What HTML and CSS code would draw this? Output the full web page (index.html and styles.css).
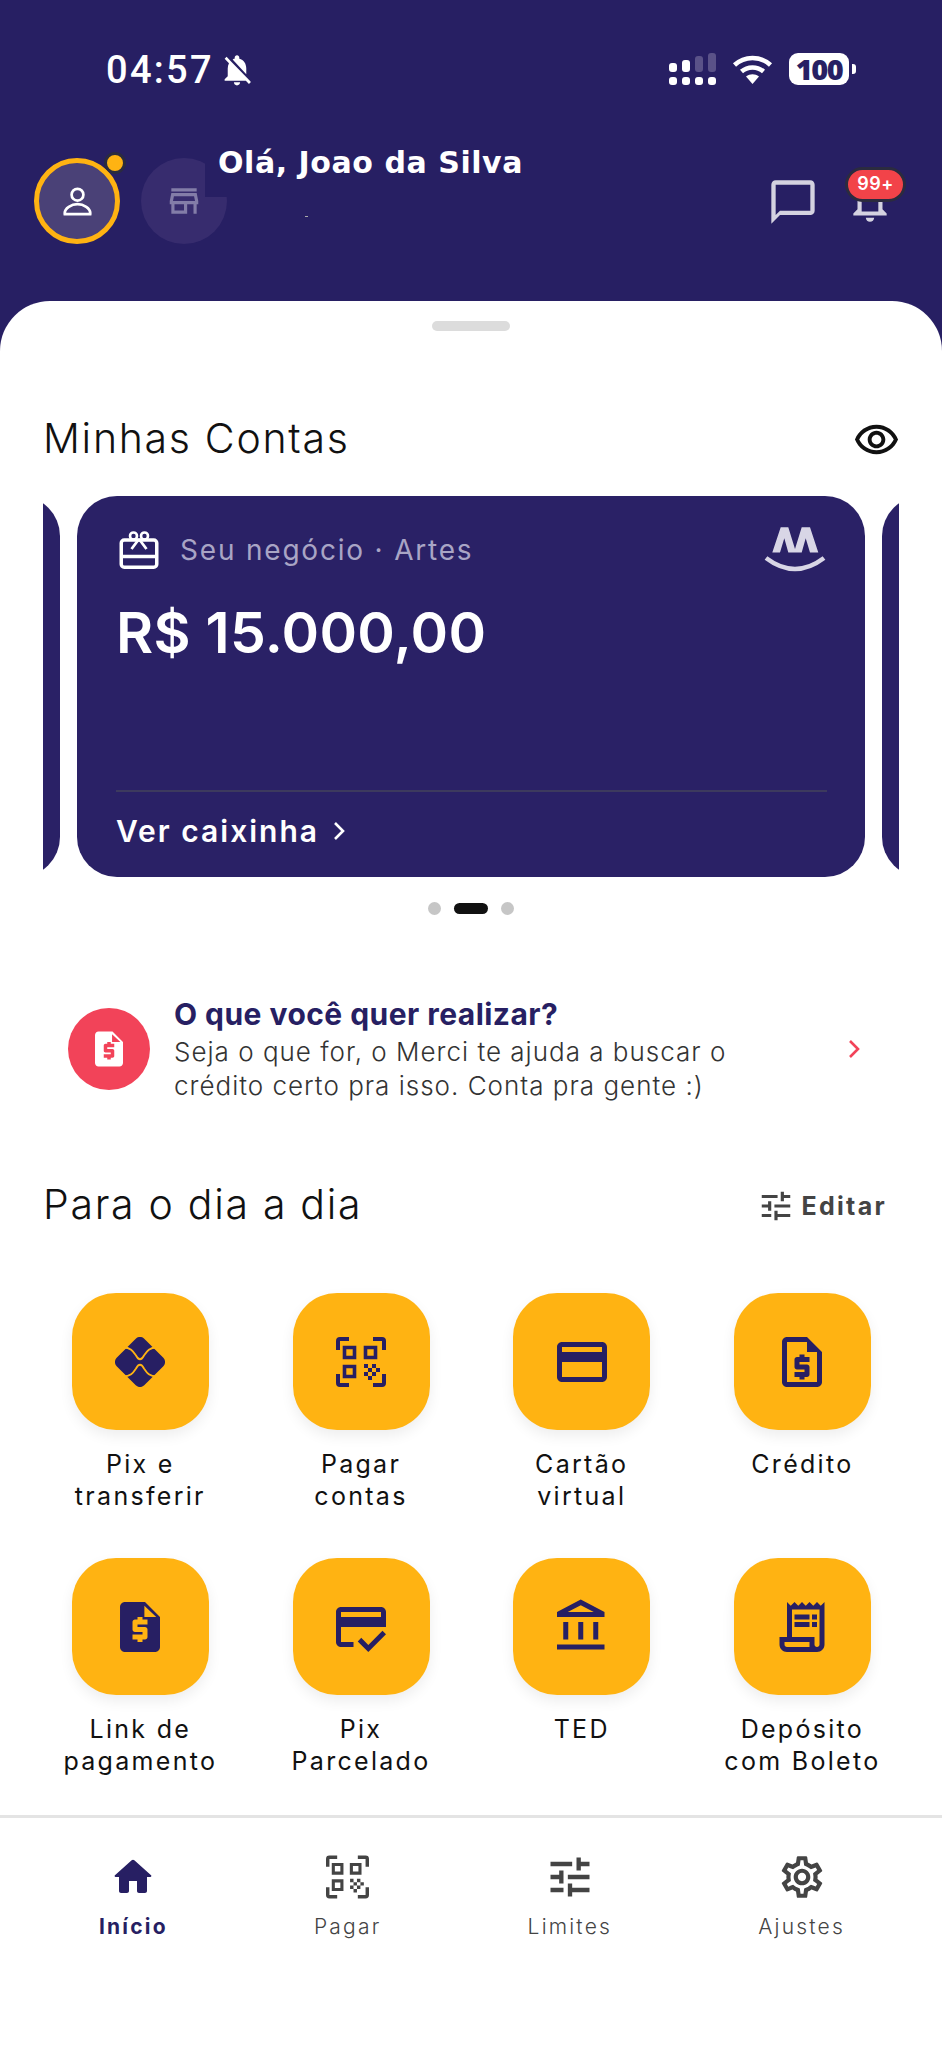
FILE: index.html
```html
<!DOCTYPE html>
<html lang="pt-BR">
<head>
<meta charset="UTF-8">
<title>Merci</title>
<link rel="stylesheet" href="styles.css">
</head>
<body>

<svg class="sprite" width="0" height="0">
  <symbol id="qr" viewBox="0 0 50 50">
    <path d="M2 13V4a2 2 0 0 1 2-2h9M37 2h9a2 2 0 0 1 2 2v9M2 37v9a2 2 0 0 0 2 2h9M37 48h9a2 2 0 0 0 2-2v-9" fill="none" stroke="currentColor" stroke-width="4"/>
    <path d="M8.500 10.500h10v10h-10zM29.500 10.500h10v10h-10zM8.500 29.500h10v10h-10z" fill="none" stroke="currentColor" stroke-width="3.600"/>
    <path d="M28 27h4v4h-4zM36 27h4v4h-4zM32 31h4v4h-4zM40 31h4v4h-4zM28 35h4v4h-4zM36 35h4v4h-4zM32 39h4v4h-4z" fill="currentColor"/>
  </symbol>
  <symbol id="tune" viewBox="0 0 24 24">
    <path d="M3 17v2h6v-2H3zM3 5v2h10V5H3zm10 16v-2h8v-2h-8v-2h-2v6h2zM7 9v2H3v2h4v2h2V9H7zm14 4v-2H11v2h10zm-6-4h2V7h4V5h-4V3h-2v6z" fill="currentColor"/>
  </symbol>
  <symbol id="chev" viewBox="0 0 12 20">
    <path d="M2 2l8 8-8 8" fill="none" stroke="currentColor" stroke-width="2.600"/>
  </symbol>
</svg>

<header class="top">
  <div class="status">
    <div class="status-left">
      <span class="clock">04:57</span>
      <svg class="muted" viewBox="2 1 20 22"><path d="M20 18.690L7.840 6.140 5.270 3.490 4 4.760l2.800 2.800v.01c-.52.99-.8 2.160-.8 3.420v5l-2 2v1h13.730l2 2L21 19.720l-1-1.030zM12 22c1.110 0 2-.89 2-2h-4c0 1.110.89 2 2 2zm6-7.320V11c0-3.080-1.640-5.640-4.500-6.320V4c0-.83-.67-1.500-1.500-1.500s-1.500.67-1.500 1.500v.68c-.15.03-.29.08-.42.120-.1.03-.2.07-.3.11h-.01c-.2.08-.4.17-.59.27-.01 0-.01 0-.02.01L18 14.680z" fill="#fff"/></svg>
    </div>
    <div class="status-right">
      <div class="signal">
        <span class="col"><i class="bar b1"></i><i class="pip"></i></span>
        <span class="col"><i class="bar b2"></i><i class="pip"></i></span>
        <span class="col"><i class="bar b3 off"></i><i class="pip"></i></span>
        <span class="col"><i class="bar b4 off"></i><i class="pip"></i></span>
      </div>
      <svg class="wifi" viewBox="0 0 41 30">
        <path d="M2.500 11C12.500 1.500 28.500 1.500 38.500 11" fill="none" stroke="#fff" stroke-width="4.500"/>
        <path d="M9.500 17.500C15.500 12 25.500 12 31.500 17.500" fill="none" stroke="#fff" stroke-width="4.500"/>
        <path d="M14 22.500c4-3 9-3 13 0l-6.500 7.500z" fill="#fff"/>
      </svg>
      <div class="battery"><span class="level">100</span><i class="nub"></i></div>
    </div>
  </div>

  <div class="greet">
    <div class="avatar">
      <svg width="29" height="29" viewBox="0 0 32 32">
        <circle cx="16" cy="8.500" r="6.500" fill="none" stroke="#fff" stroke-width="3"/>
        <path d="M2 30h28c1-7-8-11-14-11S1 23 2 30z" fill="none" stroke="#fff" stroke-width="3"/>
      </svg>
      <i class="avatar-dot"></i>
    </div>
    <div class="shop">
      <svg width="38" height="38" viewBox="0 0 24 24"><path d="M20 4H4v2h16V4zm1 10v-2l-1-5H4l-1 5v2h1v6h10v-6h4v6h2v-6h1zm-9 4H6v-4h6v4zm-6.960-6l.6-3h12.720l.6 3H5.040z" fill="#837da8"/></svg>
    </div>
    <div class="who">
      <div class="who-name">Olá, Joao da Silva</div>
      <i class="who-mark"></i>
    </div>
    <div class="top-actions">
      <svg width="52" height="52" viewBox="0 0 24 24"><path d="M20 2H4c-1.100 0-2 .9-2 2v18l4-4h14c1.100 0 2-.9 2-2V4c0-1.100-.9-2-2-2zm0 14H6l-2 2V4h16v12z" fill="#d4d2e0"/></svg>
      <div class="bell">
        <svg width="50" height="50" viewBox="0 0 24 24"><path d="M12 22c1.100 0 2-.9 2-2h-4c0 1.100.9 2 2 2zm6-6v-5c0-3.070-1.630-5.640-4.500-6.320V4c0-.83-.67-1.500-1.500-1.500s-1.500.67-1.500 1.500v.68C7.640 5.360 6 7.920 6 11v5l-2 2v1h16v-1l-2-2zm-2 1H8v-6c0-2.480 1.510-4.500 4-4.500s4 2.020 4 4.500v6z" fill="#d4d2e0"/></svg>
        <span class="badge">99+</span>
      </div>
    </div>
  </div>
</header>

<main class="sheet">
  <div class="handle"></div>

  <div class="sec-head first">
    <h2>Minhas Contas</h2>
    <svg width="47" height="47" viewBox="0 0 24 24"><path d="M12 6c3.790 0 7.170 2.130 8.820 5.500C19.170 14.870 15.790 17 12 17s-7.170-2.130-8.820-5.500C4.830 8.130 8.210 6 12 6m0-2C7 4 2.730 7.110 1 11.500 2.730 15.890 7 19 12 19s9.270-3.110 11-7.500C21.270 7.110 17 4 12 4zm0 5c1.380 0 2.500 1.120 2.500 2.500S13.380 14 12 14s-2.500-1.120-2.500-2.500S10.620 9 12 9m0-2c-2.480 0-4.500 2.020-4.500 4.500S9.520 16 12 16s4.500-2.020 4.500-4.500S14.480 7 12 7z" fill="#111"/></svg>
  </div>

  <div class="carousel">
    <div class="card"></div>
    <div class="card">
      <div class="card-top">
        <svg class="card-gift" width="40" height="38" viewBox="0 0 39 38">
          <rect x="1.750" y="9" width="35.500" height="27.250" rx="3" fill="none" stroke="#fff" stroke-width="3.500"/>
          <path d="M1.500 25.500h36" stroke="#fff" stroke-width="3.500"/>
          <circle cx="14" cy="5" r="3.500" fill="none" stroke="#fff" stroke-width="2.600"/>
          <circle cx="25" cy="5" r="3.500" fill="none" stroke="#fff" stroke-width="2.600"/>
          <path d="M19.500 8L12 18M19.500 8L27 18" stroke="#fff" stroke-width="2.800"/>
        </svg>
        <span class="card-label">Seu negócio · Artes</span>
        <svg class="card-logo" width="64" height="48" viewBox="0 0 64 48">
          <path d="M9.300 26.500L17.700 1.300h7.600L32 23l6.700-21.700H47l8.300 25.200H47L42.700 12.300 38.700 26.500H25.300L21.300 12.300 17 26.500z" fill="#d8d6e6"/>
          <path d="M3 32Q32 54 61 32" fill="none" stroke="#d8d6e6" stroke-width="4.500"/>
        </svg>
      </div>
      <div class="card-amount">R$ 15.000,00</div>
      <div class="card-foot">
        <span>Ver caixinha</span>
        <svg class="chev" width="12" height="20"><use href="#chev"/></svg>
      </div>
    </div>
    <div class="card"></div>
  </div>

  <div class="dots"><i></i><i class="on"></i><i></i></div>

  <div class="banner">
    <div class="banner-ico">
      <svg width="42" height="42" viewBox="0 0 24 24"><path d="M14 2H6c-1.100 0-1.990.9-1.990 2L4 20c0 1.100.89 2 1.990 2H18c1.100 0 2-.9 2-2V8l-6-6zm1 9h-4v1h3c.55 0 1 .45 1 1v3c0 .55-.45 1-1 1h-1v1h-2v-1H9v-2h4v-1h-3c-.55 0-1-.45-1-1v-3c0-.55.45-1 1-1h1V8h2v1h2v2zm-1.250-3V3.500L18.500 8h-4.750z" fill="#fff"/></svg>
    </div>
    <div class="banner-text">
      <div class="banner-title">O que você quer realizar?</div>
      <div class="banner-body">Seja o que for, o Merci te ajuda a buscar o<br>crédito certo pra isso. Conta pra gente :)</div>
    </div>
    <svg class="banner-chev" width="12" height="20"><use href="#chev"/></svg>
  </div>

  <div class="sec-head second">
    <h2>Para o dia a dia</h2>
    <div class="edit">
      <svg width="38" height="38"><use href="#tune"/></svg>
      <span>Editar</span>
    </div>
  </div>

  <div class="shortcuts">
    <a class="tile">
      <span class="tile-ico">
        <svg width="50" height="50" viewBox="0 0 50 50">
          <rect x="5.500" y="5.500" width="39" height="39" rx="6" transform="rotate(45 25 25)" fill="#271f63"/>
          <path d="M8 10.500C16 10.500 18 14 21 18.500C23.500 23.500 26.500 23.500 29 18.500C32 14 34 10.500 42 10.500M8 39.500C16 39.500 18 36 21 31.500C23.500 26.500 26.500 26.500 29 31.500C32 36 34 39.500 42 39.500" fill="none" stroke="#ffb312" stroke-width="1.800"/>
        </svg>
      </span>
      <span class="tile-name">Pix e<br>transferir</span>
    </a>
    <a class="tile">
      <span class="tile-ico"><svg width="50" height="50"><use href="#qr"/></svg></span>
      <span class="tile-name">Pagar<br>contas</span>
    </a>
    <a class="tile">
      <span class="tile-ico"><svg width="60" height="60" viewBox="0 0 24 24"><path d="M20 4H4c-1.110 0-1.990.89-1.990 2L2 18c0 1.110.89 2 2 2h16c1.110 0 2-.89 2-2V6c0-1.110-.89-2-2-2zm0 14H4v-6h16v6zm0-10H4V6h16v2z"/></svg></span>
      <span class="tile-name">Cartão<br>virtual</span>
    </a>
    <a class="tile">
      <span class="tile-ico"><svg width="60" height="60" viewBox="0 0 24 24"><path d="M14 2H6C4.900 2 4.010 2.900 4.010 4L4 20c0 1.100.89 2 1.990 2H18c1.100 0 2-.9 2-2V8L14 2zM18 20H6V4h8v4h4V20zM11 19h2v-1h1c.55 0 1-.45 1-1v-3c0-.55-.45-1-1-1h-3v-1h4v-2h-2V9h-2v1h-1c-.55 0-1 .45-1 1v3c0 .55.45 1 1 1h3v1H9v2h2V19z"/></svg></span>
      <span class="tile-name">Crédito</span>
    </a>
    <a class="tile">
      <span class="tile-ico"><svg width="60" height="60" viewBox="0 0 24 24"><path d="M14 2H6c-1.100 0-1.990.9-1.990 2L4 20c0 1.100.89 2 1.990 2H18c1.100 0 2-.9 2-2V8l-6-6zm1 9h-4v1h3c.55 0 1 .45 1 1v3c0 .55-.45 1-1 1h-1v1h-2v-1H9v-2h4v-1h-3c-.55 0-1-.45-1-1v-3c0-.55.45-1 1-1h1V8h2v1h2v2zm-1.250-3V3.500L18.500 8h-4.750z"/></svg></span>
      <span class="tile-name">Link de<br>pagamento</span>
    </a>
    <a class="tile">
      <span class="tile-ico"><svg width="60" height="60" viewBox="0 0 24 24"><path d="M20 4H4C2.890 4 2.010 4.890 2.010 6L2 18c0 1.110.89 2 2 2h5v-2H4v-6h18V6C22 4.890 21.110 4 20 4zM20 8H4V6h16V8zM14.930 19.170l-2.830-2.830-1.410 1.410L14.930 22 22 14.930l-1.410-1.410L14.930 19.170z"/></svg></span>
      <span class="tile-name">Pix<br>Parcelado</span>
    </a>
    <a class="tile">
      <span class="tile-ico"><svg width="60" height="60" viewBox="0 0 24 24"><path d="M6.500 10h-2v7h2v-7zm6 0h-2v7h2v-7zm8.500 9H2v2h19v-2zm-2.500-9h-2v7h2v-7zm-7-6.740L16.710 6H6.290l5.210-2.740m0-2.260L2 6v2h19V6l-9.500-5z"/></svg></span>
      <span class="tile-name">TED</span>
    </a>
    <a class="tile">
      <span class="tile-ico"><svg width="60" height="60" viewBox="0 0 24 24"><path d="M19.500 3.500L18 2l-1.500 1.500L15 2l-1.500 1.500L12 2l-1.500 1.500L9 2 7.500 3.500 6 2v14H3v3c0 1.660 1.340 3 3 3h12c1.660 0 3-1.340 3-3V2l-1.500 1.500zM15 20H6c-.55 0-1-.45-1-1v-1h10v2zm4-1c0 .55-.45 1-1 1s-1-.45-1-1v-3H8V5h11v14z"/><path d="M9 7h6v2H9zM16 7h2v2h-2zM9 10h6v2H9zM16 10h2v2h-2z"/></svg></span>
      <span class="tile-name">Depósito<br>com Boleto</span>
    </a>
  </div>
</main>

<nav class="tabs">
  <a class="tab active">
    <svg width="48" height="52" viewBox="0 0 24 24"><path d="M10 19v-5h4v5c0 .55.45 1 1 1h3c.55 0 1-.45 1-1v-7h1.700c.46 0 .68-.57.33-.87L12.670 3.600c-.38-.34-.96-.34-1.340 0l-8.360 7.530c-.34.3-.13.87.33.87H5v7c0 .55.45 1 1 1h3c.55 0 1-.45 1-1z" fill="currentColor"/></svg>
    <span>Início</span>
  </a>
  <a class="tab">
    <svg width="43" height="52"><use href="#qr"/></svg>
    <span>Pagar</span>
  </a>
  <a class="tab">
    <svg width="52" height="52"><use href="#tune"/></svg>
    <span>Limites</span>
  </a>
  <a class="tab">
    <svg width="50" height="52" viewBox="0 0 24 24"><path d="M19.430 12.980c.04-.32.07-.64.07-.98 0-.34-.03-.66-.07-.98l2.110-1.650c.19-.15.24-.42.12-.64l-2-3.460c-.09-.16-.26-.25-.44-.25-.06 0-.12.01-.17.03l-2.490 1c-.52-.4-1.080-.73-1.690-.98l-.38-2.650C14.460 2.180 14.250 2 14 2h-4c-.25 0-.46.18-.49.42l-.38 2.650c-.61.25-1.170.59-1.690.98l-2.490-1c-.06-.02-.12-.03-.18-.03-.17 0-.34.09-.43.25l-2 3.460c-.13.22-.07.49.12.64l2.110 1.650c-.04.32-.07.65-.07.98 0 .33.03.66.07.98l-2.110 1.650c-.19.15-.24.42-.12.64l2 3.460c.09.16.26.25.44.25.06 0 .12-.01.17-.03l2.490-1c.52.4 1.080.73 1.690.98l.38 2.650c.03.24.24.42.49.42h4c.25 0 .46-.18.49-.42l.38-2.650c.61-.25 1.170-.59 1.690-.98l2.490 1c.06.02.12.03.18.03.17 0 .34-.09.43-.25l2-3.460c.12-.22.07-.49-.12-.64l-2.110-1.650zm-1.980-1.710c.04.31.05.52.05.73 0 .21-.02.43-.05.73l-.14 1.130.89.7 1.080.84-.7 1.210-1.270-.51-1.040-.42-.9.68c-.43.32-.84.56-1.250.73l-1.060.43-.16 1.130-.2 1.350h-1.400l-.19-1.350-.16-1.130-1.060-.43c-.43-.18-.83-.41-1.230-.71l-.91-.7-1.060.43-1.270.51-.7-1.210 1.080-.84.89-.7-.14-1.130c-.03-.31-.05-.54-.05-.74s.02-.43.05-.73l.14-1.130-.89-.7-1.080-.84.7-1.210 1.270.51 1.040.42.9-.68c.43-.32.84-.56 1.250-.73l1.060-.43.16-1.130.2-1.350h1.390l.19 1.350.16 1.130 1.060.43c.43.18.83.41 1.230.71l.91.7 1.060-.43 1.270-.51.7 1.210-1.070.85-.89.7.14 1.130zM12 8c-2.210 0-4 1.790-4 4s1.790 4 4 4 4-1.790 4-4-1.790-4-4-4zm0 6c-1.100 0-2-.9-2-2s.9-2 2-2 2 .9 2 2-.9 2-2 2z" fill="currentColor"/></svg>
    <span>Ajustes</span>
  </a>
</nav>

</body>
</html>
```

FILE: styles.css
```css
* { box-sizing: border-box; }

body {
  margin: 0;
  width: 942px;
  height: 2048px;
  overflow: hidden;
  background: #fff;
  font-family: Inter, "Open Sans", sans-serif;
  color: #111;
}

.sprite { position: absolute; }

svg { display: block; flex: none; }

/* purple top area */
.top {
  height: 351px;
  padding-top: 50px;
  background: #271f63;
}

.status {
  display: flex;
  justify-content: space-between;
  height: 40px;
  padding: 0 93px 0 106px;
}
.status-left { display: flex; align-items: center; gap: 7px; }
.clock {
  font-family: Roboto, sans-serif;
  font-size: 38px;
  font-weight: 500;
  letter-spacing: 2.300px;
  color: #fff;
}
.muted { width: 32px; height: 34px; }

.status-right { display: flex; align-items: center; margin-top: -2px; }
.signal {
  display: flex;
  gap: 5px;
  align-items: flex-end;
  height: 32px;
  margin-right: 16px;
}
.col { display: flex; flex-direction: column; gap: 5px; width: 8px; }
.bar { display: block; border-radius: 3px; background: #fff; }
.pip { display: block; height: 8px; border-radius: 3px; background: #fff; }
.b1 { height: 9px; }
.b2 { height: 12px; }
.b3 { height: 16px; }
.b4 { height: 19px; }
.bar.off { background: #5a5288; }
.wifi { width: 41px; height: 30px; margin-right: 16px; }

.battery {
  position: relative;
  width: 60px;
  height: 32px;
  border-radius: 9px;
  background: #fff;
  text-align: center;
}
.level {
  font-family: "Open Sans", sans-serif;
  font-size: 29px;
  font-weight: 800;
  line-height: 32px;
  letter-spacing: -1.5px;
  color: #271f63;
}
.nub {
  position: absolute;
  left: 63px;
  top: 11px;
  width: 4px;
  height: 10px;
  border-radius: 0 3px 3px 0;
  background: #fff;
}

.greet {
  display: flex;
  margin-top: 68px;
  padding-left: 34px;
}
.avatar {
  position: relative;
  display: flex;
  align-items: center;
  justify-content: center;
  width: 86px;
  height: 86px;
  border: 5px solid #ffb312;
  border-radius: 50%;
  background: #4a4177;
}
.avatar-dot {
  position: absolute;
  top: -11px;
  right: -11px;
  width: 22px;
  height: 22px;
  border: 3px solid #2b2b3f;
  border-radius: 50%;
  background: #ffb312;
}
.shop {
  display: flex;
  align-items: center;
  justify-content: center;
  width: 86px;
  height: 86px;
  margin-left: 21px;
  border-radius: 50%;
  background: #372c6e;
}
.who { margin-left: -22px; margin-top: -15px; position: relative; }
.who-name {
  width: 330px;
  height: 54px;
  padding-left: 13px;
  background: #271f63;
  font-family: "DejaVu Sans", sans-serif;
  font-size: 30px;
  font-weight: 700;
  line-height: 40px;
  letter-spacing: .55px;
  color: #fff;
}
.who-mark {
  display: block;
  width: 3px;
  height: 1px;
  margin: 19px 0 0 100px;
  background: #aaa;
}
.top-actions {
  display: flex;
  gap: 26px;
  margin-left: auto;
  margin-right: 47px;
  padding-top: 18px;
}
.bell { position: relative; }
.badge {
  position: absolute;
  left: 0;
  top: -9px;
  width: 61px;
  height: 35px;
  border: 3px solid #2b2b3f;
  border-radius: 18px;
  background: #f24349;
  font-size: 18px;
  font-weight: 600;
  line-height: 28px;
  letter-spacing: .5px;
  text-align: center;
  color: #fff;
}

/* white sheet */
.sheet {
  position: relative;
  height: 1514px;
  margin-top: -50px;
  padding-top: 20px;
  border-radius: 50px 50px 0 0;
  background: #fff;
}
.handle {
  width: 78px;
  height: 10px;
  margin: 0 auto;
  border-radius: 5px;
  background: #dcdcdc;
}

.sec-head {
  display: flex;
  align-items: center;
  justify-content: space-between;
  height: 60px;
  padding: 0 42px 0 43px;
}
.sec-head.first { margin-top: 79px; }
.sec-head.second { margin-top: 73px; padding-right: 55px; }
.sec-head h2 {
  margin: 0 0 4px;
  font-size: 41px;
  font-weight: 300;
  letter-spacing: 1.700px;
  color: #111;
}

.carousel {
  display: flex;
  justify-content: center;
  gap: 17px;
  margin: 26px 43px 0;
  overflow: hidden;
}
.card {
  display: flex;
  flex: none;
  flex-direction: column;
  width: 788px;
  height: 381px;
  padding: 32px 38px 0 39px;
  border-radius: 40px;
  background: #2a2166;
  color: #fff;
}
.card-top {
  display: flex;
  align-items: center;
  height: 44px;
}
.card-gift { margin-left: 3px; }
.card-label {
  margin-left: 21px;
  font-size: 28px;
  font-weight: 400;
  letter-spacing: 1.800px;
  color: #a9a5c5;
}
.card-logo { margin-left: auto; }
.card-amount {
  margin-top: 26px;
  font-size: 57px;
  font-weight: 600;
  line-height: 70px;
  letter-spacing: .3px;
  color: #fff;
}
.card-foot {
  display: flex;
  align-items: center;
  gap: 14px;
  height: 87px;
  margin-top: auto;
  padding-bottom: 8px;
  border-top: 2px solid #3d3a5e;
  font-size: 30px;
  font-weight: 600;
  letter-spacing: 2px;
}

.dots {
  display: flex;
  justify-content: center;
  align-items: center;
  gap: 13px;
  height: 13px;
  margin-top: 25px;
}
.dots i { width: 13px; height: 13px; border-radius: 50%; background: #c6c6c6; }
.dots .on { width: 34px; height: 11px; border-radius: 6px; background: #111; }

.banner {
  display: flex;
  align-items: center;
  height: 108px;
  margin-top: 80px;
  padding: 0 82px 0 68px;
}
.banner-ico {
  display: flex;
  align-items: center;
  justify-content: center;
  width: 82px;
  height: 82px;
  border-radius: 50%;
  background: #f24359;
}
.banner-text { margin-left: 24px; }
.banner-title {
  margin-bottom: 2px;
  font-size: 30px;
  font-weight: 700;
  line-height: 38px;
  letter-spacing: .45px;
  color: #271f63;
}
.banner-body {
  font-size: 26px;
  font-weight: 300;
  line-height: 34px;
  letter-spacing: 1px;
  color: #333;
}
.banner-chev { margin-left: auto; color: #f24359; }

.edit {
  display: flex;
  align-items: center;
  gap: 7px;
  font-size: 25px;
  font-weight: 700;
  letter-spacing: 2.300px;
  color: #444;
}

.shortcuts {
  display: grid;
  grid-template-columns: repeat(4, 220.7px);
  grid-template-rows: 265px 257px;
  margin: 57px 0 0 30px;
}
.tile {
  display: flex;
  flex-direction: column;
  align-items: center;
}
.tile-ico {
  display: flex;
  align-items: center;
  justify-content: center;
  width: 137px;
  height: 137px;
  border-radius: 44px;
  background: #ffb312;
  box-shadow: 0 6px 14px rgba(0, 0, 0, .07);
  color: #271f63;
  fill: #271f63;
}
.tile-name {
  margin-top: 18px;
  font-size: 25px;
  font-weight: 400;
  line-height: 32px;
  letter-spacing: 2.300px;
  text-align: center;
  color: #111;
}

/* bottom tabs */
.tabs {
  position: relative;
  display: flex;
  justify-content: space-between;
  height: 233px;
  padding: 33px 97px 0 99px;
  border-top: 3px solid #e4e4e4;
  background: #fff;
}
.tab {
  display: flex;
  flex-direction: column;
  align-items: center;
  gap: 9px;
  font-size: 21px;
  font-weight: 300;
  line-height: 30px;
  letter-spacing: 2.200px;
  color: #444;
}
.tab.active { font-weight: 700; color: #271f63; }
```
